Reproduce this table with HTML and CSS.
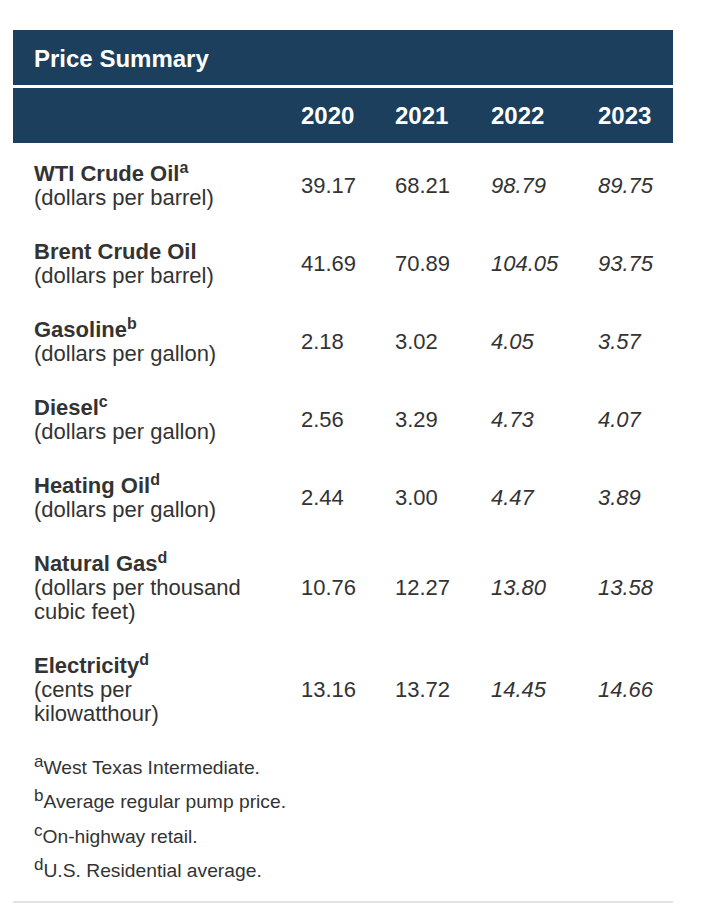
FILE: index.html
```html
<!DOCTYPE html>
<html lang="en">
<head>
<meta charset="utf-8">
<title>Price Summary</title>
<link rel="stylesheet" href="styles.css">
</head>
<body>
<section class="summary">
  <h2 class="summary-title">Price Summary</h2>
  <table class="price-table">
    <colgroup>
      <col class="col-label">
      <col class="col-2020">
      <col class="col-2021">
      <col class="col-2022">
      <col class="col-2023">
    </colgroup>
    <thead>
      <tr>
        <th></th>
        <th>2020</th>
        <th>2021</th>
        <th>2022</th>
        <th>2023</th>
      </tr>
    </thead>
    <tbody>
      <tr>
        <td class="label"><strong>WTI Crude Oil<sup>a</sup></strong><span>(dollars per barrel)</span></td>
        <td>39.17</td><td>68.21</td><td class="fc">98.79</td><td class="fc">89.75</td>
      </tr>
      <tr>
        <td class="label"><strong>Brent Crude Oil</strong><span>(dollars per barrel)</span></td>
        <td>41.69</td><td>70.89</td><td class="fc">104.05</td><td class="fc">93.75</td>
      </tr>
      <tr>
        <td class="label"><strong>Gasoline<sup>b</sup></strong><span>(dollars per gallon)</span></td>
        <td>2.18</td><td>3.02</td><td class="fc">4.05</td><td class="fc">3.57</td>
      </tr>
      <tr>
        <td class="label"><strong>Diesel<sup>c</sup></strong><span>(dollars per gallon)</span></td>
        <td>2.56</td><td>3.29</td><td class="fc">4.73</td><td class="fc">4.07</td>
      </tr>
      <tr>
        <td class="label"><strong>Heating Oil<sup>d</sup></strong><span>(dollars per gallon)</span></td>
        <td>2.44</td><td>3.00</td><td class="fc">4.47</td><td class="fc">3.89</td>
      </tr>
      <tr>
        <td class="label"><strong>Natural Gas<sup>d</sup></strong><span>(dollars per thousand cubic feet)</span></td>
        <td>10.76</td><td>12.27</td><td class="fc">13.80</td><td class="fc">13.58</td>
      </tr>
      <tr>
        <td class="label"><strong>Electricity<sup>d</sup></strong><span>(cents per kilowatthour)</span></td>
        <td>13.16</td><td>13.72</td><td class="fc">14.45</td><td class="fc">14.66</td>
      </tr>
    </tbody>
  </table>
  <div class="notes">
    <p><sup>a</sup>West Texas Intermediate.</p>
    <p><sup>b</sup>Average regular pump price.</p>
    <p><sup>c</sup>On-highway retail.</p>
    <p><sup>d</sup>U.S. Residential average.</p>
  </div>
</section>
</body>
</html>
```

FILE: styles.css
```css
html, body {
  margin: 0;
  padding: 0;
  background: #ffffff;
}

body {
  font-family: "Liberation Sans", Arial, Helvetica, sans-serif;
  color: #333333;
}

.summary {
  width: 660px;
  margin: 30px 0 0 13px;
}

.summary-title {
  margin: 0 0 3px 0;
  padding: 17px 21px 15px 21px;
  background: #1b3f5c;
  color: #ffffff;
  font-size: 24px;
  line-height: 23px;
  font-weight: bold;
}

.price-table {
  width: 660px;
  table-layout: fixed;
  border-collapse: collapse;
  border-spacing: 0;
}

.col-label { width: 267px; }
.col-2020 { width: 94px; }
.col-2021 { width: 96px; }
.col-2022 { width: 107px; }
.col-2023 { width: 96px; }

.price-table thead th {
  background: #1b3f5c;
  color: #ffffff;
  font-size: 24px;
  line-height: 23px;
  font-weight: bold;
  text-align: left;
  padding: 16px 0 16px 21px;
}

.price-table tbody td {
  font-size: 22px;
  line-height: 24px;
  text-align: left;
  vertical-align: middle;
  padding: 19px 0 11px 21px;
  color: #333333;
}

.price-table td.label {
  padding-right: 30px;
}

.label strong,
.label span {
  display: block;
}

.label strong {
  font-weight: bold;
}

.label sup {
  font-size: 16px;
  line-height: 0;
  vertical-align: super;
}

.price-table td.fc {
  font-style: italic;
}

.notes {
  margin-top: 20px;
  padding: 0 21px 19px 21px;
  border-bottom: 2px solid #e2e2e2;
  display: flex;
  flex-direction: column;
  gap: 12.4px;
}

.notes p {
  margin: 0;
  font-size: 19.25px;
  line-height: 22px;
}

.notes sup {
  font-size: 17px;
  line-height: 0;
  vertical-align: super;
}
```
